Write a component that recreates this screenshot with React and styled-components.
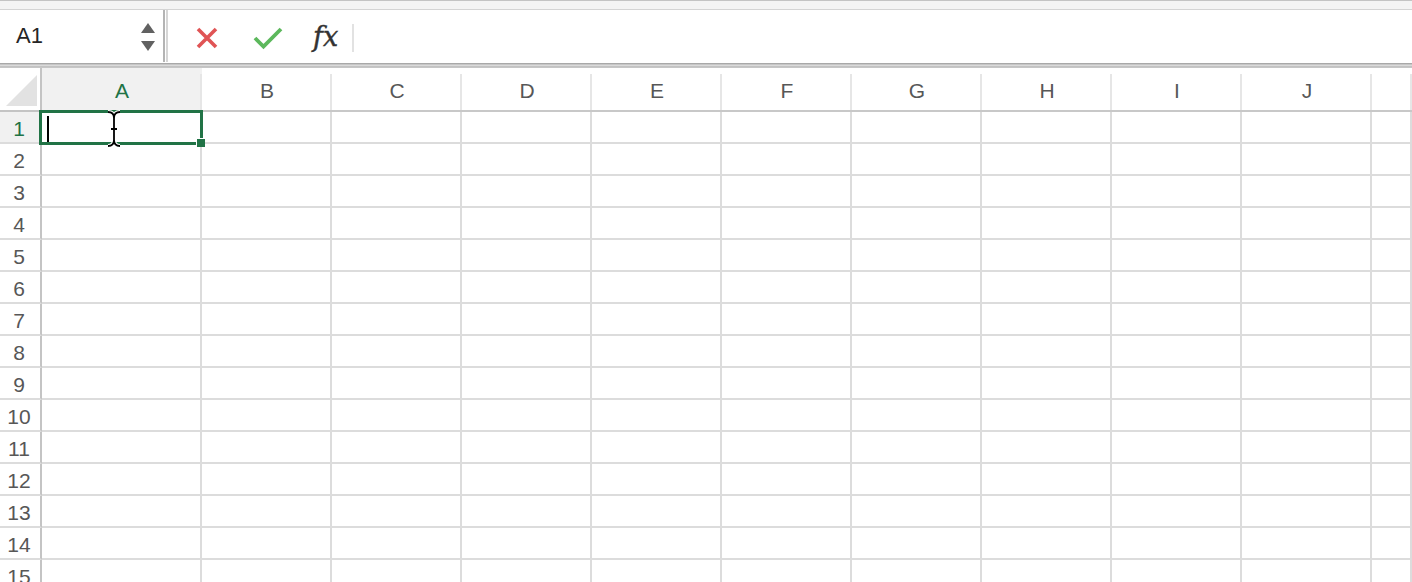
import React from 'react'
import styled, { createGlobalStyle } from 'styled-components'

const GlobalStyle = createGlobalStyle`
  html, body {
    margin: 0;
    padding: 0;
    background: #ffffff;
    overflow: hidden;
  }
  body {
    font-family: 'Liberation Sans', Arial, sans-serif;
  }
`

const COLUMNS = ['A', 'B', 'C', 'D', 'E', 'F', 'G', 'H', 'I', 'J', '']
const ROWS = Array.from({ length: 15 }, (_, i) => i + 1)

const Page = styled.div`
  width: 1412px;
  height: 582px;
  overflow: hidden;
  display: flex;
  flex-direction: column;
`

const TopStrip = styled.div`
  flex-shrink: 0;
  height: 8px;
  background: #f4f4f4;
  border-top: 1px solid #c4c4c4;
  border-bottom: 1px solid #d4d4d4;
`

const FormulaBar = styled.div`
  flex-shrink: 0;
  height: 52px;
  display: flex;
  align-items: stretch;
  background: #fff;
`

const NameBox = styled.div`
  width: 165px;
  display: flex;
  align-items: center;
  justify-content: space-between;
  padding: 0 8px 0 16px;
  box-sizing: border-box;
  border-right: 2px solid #b4b4b4;
  font-size: 22px;
  color: #262626;
`

const Spinner = styled.div`
  display: flex;
  flex-direction: column;
  gap: 8px;
  align-items: center;
  padding-top: 2px;
`

const Arrow = styled.div`
  width: 0;
  height: 0;
  border-left: 7px solid transparent;
  border-right: 7px solid transparent;
  ${p => (p.down ? 'border-top: 10px solid #616161;' : 'border-bottom: 10px solid #616161;')}
`

const Gap = styled.div`
  width: 2px;
  background: #d6d6d6;
  margin-left: 1px;
`

const Actions = styled.div`
  display: flex;
  align-items: center;
  padding-left: 27px;
  padding-top: 4px;
`

const IconButton = styled.div`
  width: ${p => p.w}px;
  display: flex;
  align-items: center;
  justify-content: flex-start;
`

const Fx = styled.div`
  font-family: 'DejaVu Serif', 'Liberation Serif', serif;
  font-style: italic;
  font-size: 27px;
  color: #333;
  padding-bottom: 4px;
  -webkit-text-stroke: 0.4px #333;
`

const Divider = styled.div`
  width: 2px;
  height: 28px;
  background: #e2e2e2;
  margin-left: 14px;
`

const FormulaInput = styled.div`
  flex: 1;
`

const Band = styled.div`
  flex-shrink: 0;
  margin-top: 1px;
  height: 5px;
  background: linear-gradient(#a8a8a8 0, #a8a8a8 1px, #e4e4e4 2px, #d0d0d0 3px, #b4b4b4 4px, #d8d8d8 5px);
`

const Sheet = styled.div`
  flex: 1;
  min-height: 0;
  overflow: hidden;
  display: grid;
  grid-template-columns: 42px 160px repeat(9, 130px) 1fr;
  grid-template-rows: 44px;
  grid-auto-rows: 32px;
  color: #575757;
`

const Corner = styled.div`
  position: relative;
  background: #fff;
  border-right: 2px solid #c4c4c4;
  border-bottom: 2px solid #c4c4c4;
`

const CornerTriangle = styled.div`
  position: absolute;
  right: 3px;
  bottom: 4px;
  width: 0;
  height: 0;
  border-left: 31px solid transparent;
  border-bottom: 31px solid #e2e2e2;
`

const ColHeader = styled.div`
  display: flex;
  align-items: center;
  justify-content: center;
  padding-top: 4px;
  font-size: 21px;
  background: ${p => (p.active ? '#f1f1f1' : '#fff')};
  color: ${p => (p.active ? '#217346' : '#575757')};
  border-bottom: 2px solid #c8c8c8;
  position: relative;
  &::after {
    content: '';
    position: absolute;
    right: 0;
    top: 6px;
    bottom: 0;
    width: 2px;
    background: #e6e6e6;
  }
`

const RowHeader = styled.div`
  display: flex;
  align-items: center;
  justify-content: center;
  padding-top: 3px;
  padding-right: 2px;
  font-size: 21px;
  background: ${p => (p.active ? '#f1f1f1' : '#fff')};
  color: ${p => (p.active ? '#217346' : '#575757')};
  border-right: 2px solid #c4c4c4;
  border-bottom: 2px solid #dcdcdc;
`

const Cell = styled.div`
  position: relative;
  border-right: 2px solid #dcdcdc;
  border-bottom: 2px solid #dcdcdc;
`

const Selection = styled.div`
  position: absolute;
  left: -3px;
  top: -2px;
  right: -3px;
  bottom: -3px;
  border: 3px solid #217346;
  z-index: 2;
`

const FillHandle = styled.div`
  position: absolute;
  right: -5px;
  bottom: -5px;
  width: 8px;
  height: 8px;
  background: #217346;
  border: 1px solid #fff;
  border-right: none;
  border-bottom: none;
`

const Caret = styled.div`
  position: absolute;
  left: 5px;
  top: 3px;
  width: 2px;
  height: 26px;
  background: #000;
`

const IBeam = styled.svg`
  position: absolute;
  left: 64px;
  top: -3px;
`

const IBEAM_PATH =
  'M2 2 C6 2 8 4 8 8 L8 30 C8 34 6 36 2 36 M14 2 C10 2 8 4 8 8 M8 30 C8 34 10 36 14 36 M5 19 L11 19'

function XIcon() {
  return (
    <svg width="24" height="24" viewBox="0 0 24 24">
      <path d="M3 3 L21 21 M21 3 L3 21" stroke="#e05455" strokeWidth="3.6" strokeLinecap="butt" />
    </svg>
  )
}

function CheckIcon() {
  return (
    <svg width="30" height="24" viewBox="0 0 30 24">
      <path d="M2 12 L10.5 20.5 L28 3" stroke="#5cb85c" strokeWidth="3.8" fill="none" />
    </svg>
  )
}

export default function App() {
  return (
    <Page>
      <GlobalStyle />
      <TopStrip />
      <FormulaBar>
        <NameBox>
          <span>A1</span>
          <Spinner>
            <Arrow />
            <Arrow down />
          </Spinner>
        </NameBox>
        <Gap />
        <Actions>
          <IconButton w={58}>
            <XIcon />
          </IconButton>
          <IconButton w={60}>
            <CheckIcon />
          </IconButton>
          <Fx>fx</Fx>
          <Divider />
        </Actions>
        <FormulaInput />
      </FormulaBar>
      <Band />
      <Sheet>
        <Corner>
          <CornerTriangle />
        </Corner>
        {COLUMNS.map((c, i) => (
          <ColHeader key={'h' + i} active={c === 'A'}>
            {c}
          </ColHeader>
        ))}
        {ROWS.map(r => (
          <React.Fragment key={r}>
            <RowHeader active={r === 1}>{r}</RowHeader>
            {COLUMNS.map((c, i) => (
              <Cell key={c + i}>
                {r === 1 && c === 'A' && (
                  <Selection>
                    <Caret />
                    <IBeam width="16" height="38" viewBox="0 0 16 38">
                      <path d={IBEAM_PATH} stroke="#fff" strokeWidth="4" fill="none" />
                      <path d={IBEAM_PATH} stroke="#000" strokeWidth="1.8" fill="none" />
                    </IBeam>
                    <FillHandle />
                  </Selection>
                )}
              </Cell>
            ))}
          </React.Fragment>
        ))}
      </Sheet>
    </Page>
  )
}
